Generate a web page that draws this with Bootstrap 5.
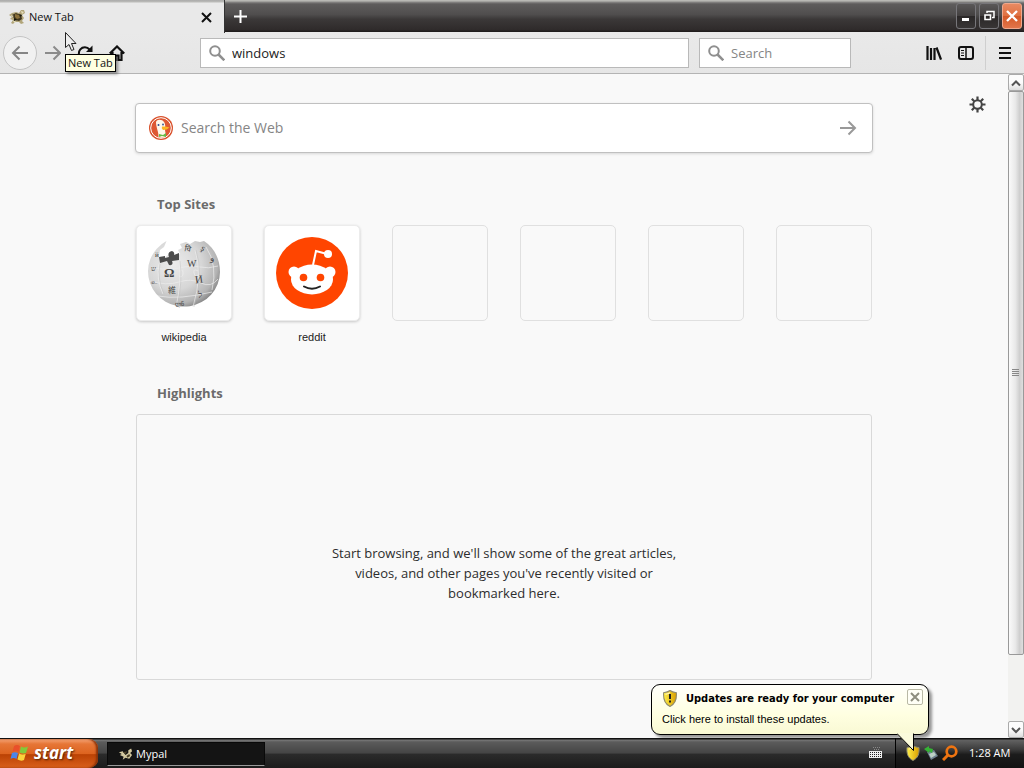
<!DOCTYPE html>
<html lang="en">
<head>
<meta charset="utf-8">
<meta name="viewport" content="width=device-width, initial-scale=1">
<title>New Tab</title>
<link rel="stylesheet" href="https://cdn.jsdelivr.net/npm/bootstrap@5.3.0/dist/css/bootstrap.min.css">
<style>
body { font: 11px/16px "Open Sans", "Noto Sans", sans-serif; color: #111; background: #f9f9f9; }
button { padding: 0; border: 0; background: none; color: inherit; }
svg { display: block; flex: none; }
.titlebar { height: 32px; background: linear-gradient(#b8b8b4 0 1px, #8a8987 2px, #5e5c5c 4px, #504e4e 45%, #3b3838 60%, #2f2b2b 92%, #1c1919); }
.tab { width: 225px; height: 33px; background: linear-gradient(#aaa 0, #bcbcb9 2px, #e9e9e9 3px); padding: 1px 12px 0 9px; border-right: 1px solid #333; z-index: 1; }
.winbtns { gap: 3px; padding: 3px 2px 0 0; }
.tip { left: 65px; top: 54px; height: 18px; padding: 0 2px; background: #ffffe1; border: 1px solid #000; box-shadow: 2px 2px 3px #0006; white-space: nowrap; z-index: 5; }
.pointer { left: 65px; top: 32px; z-index: 6; }
.winbtn { width: 20px; height: 26px; border: 1px solid #77767a; border-radius: 3px; background: linear-gradient(#5a5858, #423f3f 50%, #2b2828 52%, #383535); color: #fff; display: grid; place-items: center; }
.winbtn.shut { border-color: #f0a88c; background: linear-gradient(#e88a62, #e07040 50%, #d45a28 52%, #e2754a); }
.toolbar { height: 42px; background: linear-gradient(#e9e9e9, #e6e6e6); border-bottom: 1px solid #b4b4b4; padding: 0 3px; }
.backbtn { width: 34px; height: 34px; border: 1px solid #c4c4c4; border-radius: 50%; background: #f1f1f1; display: grid; place-items: center; }
.leftset { width: 197px; }
.rightset { width: 170px; padding-right: 9px; }
.divider { width: 1px; height: 34px; background: #cfcfcf; margin: 0 12px 0 11px; }
.field { height: 30px; background: #fff; border: 1px solid #b9b9b9; padding-left: 8px; gap: 7px; }
.quick { width: 152px; margin-left: 10px; }
.field input { border: 0; outline: 0; background: none; min-width: 0; font: 13px/20px "Open Sans", sans-serif; color: #222; padding: 0; }
input::placeholder { color: #858585 !important; opacity: 1; }
.websearch { height: 50px; margin: -1px; background: #fff; border: 1px solid #c0c0c0; border-radius: 4px; box-shadow: 0 1px 3px #0002; padding: 0 15px 0 13px; }
.websearch input { border: 0; outline: 0; font: 14px/22px "Open Sans", sans-serif; min-width: 0; }
.sheet { padding: 30px 16px; }
.inner { max-width: 736px; }
.sites { margin-top: 42px; }
.highlights { margin-top: 38px; }
.heading { font: bold 13px/20px "Open Sans", sans-serif; color: #6b6b6b; margin: 0 0 11px 21px; }
.site { width: 96px; color: #222; text-decoration: none; text-align: center; font-family: "Liberation Sans", sans-serif; }
.tile { height: 96px; border: 1px solid #e0e0e0; border-radius: 5px; margin-bottom: 8px; }
.tile.full { background: #fff; border-color: #ececec; box-shadow: 0 1px 3px #0003; display: grid; place-items: center; }
.empty { min-height: 266px; padding-top: 128px; border: 1px solid #d9d9d9; border-radius: 3px; font-size: 13px; line-height: 20px; text-align: center; color: #2d2d2d; }
.empty p { max-width: 352px; }
.gear { right: 22px; top: 22px; }
.scroller { width: 16px; background: #f2f2f0; }
.scroller button { height: 17px; border: 1px solid #aaa; border-radius: 2px; background: linear-gradient(#fcfcfc 50%, #dedede); display: grid; place-items: center; }
.thumb { flex: 0 0 564px; border: 1px solid #999; border-radius: 2px; background: linear-gradient(90deg, #fafafa, #e9e9e9 45%, #cfcfcf 75%, #dedede); display: grid; place-items: center; }
.taskbar { height: 30px; background: linear-gradient(#111 0 1px, #797979 2px, #5b5b5b 4px, #454545 50%, #2b2b2b 54%, #1c1c1c); color: #fff; }
.startbtn { width: 98px; height: 29px; align-self: end; border-radius: 0 9px 9px 0; background: linear-gradient(#f6a679 0, #e67637 5px, #dd6420 50%, #bb4204 54%, #d9601c); box-shadow: inset -2px 0 2px #8a3208; font: italic bold 17px/24px "Open Sans", sans-serif; text-shadow: 1px 1px 2px #0009; padding: 0 0 1px 10px; }
.taskbtn { width: 158px; height: 24px; margin: 4px 0 0 9px; background: #141414; border: 1px solid #090909; border-bottom-color: #999; padding-left: 10px; gap: 3px; }
.tray { width: 129px; border-left: 1px solid #000; background: linear-gradient(#111 0 1px, #626262 2px, #393939 40%, #1c1c1c 55%, #121212); padding-left: 10px; gap: 3px; }
.balloon { left: -245px; bottom: 33px; width: 278px; height: 51px; background: linear-gradient(#fffffb, #ffffe1 60%, #f9f9d4); border: 1px solid #000; border-radius: 9px; box-shadow: 3px 3px 3px #0006; color: #000; padding: 4px 5px 0 10px; z-index: 5; }
.balloon p { font: 11px/20px "Liberation Sans", sans-serif; margin: 0; white-space: nowrap; }
.balloon .lead-line { font: bold 11px/20px "DejaVu Sans Condensed", sans-serif; }
.balloonx { width: 16px; height: 16px; border: 1px solid #b9b9a5; border-radius: 2px; background: #fffff6; display: grid; place-items: center; }
.tail { left: 245px; top: 48px; }
</style>
</head>
<body class="d-flex flex-column vh-100 overflow-hidden">

<svg width="0" height="0" class="position-absolute" aria-hidden="true">
  <defs>
    <linearGradient id="sh" x1="0" x2="1"><stop offset="0" stop-color="#fff04a"/><stop offset="1" stop-color="#d89e00"/></linearGradient>
    <symbol id="turtle" viewBox="0 0 16 16">
      <path d="M0 6 3 4 7 3 10 4 12 1 15 1 16 4 13 6 15 9 13 12 15 14 12 15 10 13 6 13 4 15 2 14 4 11 1 10 3 8z" fill="#b1a57a"/>
      <path d="M3 6l4-2 5 2 1 4-3 2-4-1z" fill="#423820"/><path d="M6 5l4 1 1 3-3 1-2-2z" fill="#8b713b"/>
      <path d="M12 2l3 1-2 2zM2 6l3 1-2 1zM4 12l3-1-1 3z" fill="#e7dfbd"/><path d="M10 5l3 1-1 2zM5 9l3 2-3 1z" fill="#18180c"/>
    </symbol>
    <symbol id="paleturtle" viewBox="0 0 16 16">
      <path d="M1 6 5 5 8 9 11 7 11 4 14 2 15 5 13 7 15 9 12 13 8 12 5 14 6 11 2 9 4 8z" fill="#d4c9a0"/>
      <path d="M5 6 10 5 8 8zM9 10 12 8 13 10 10 12z" fill="#4b4126"/>
    </symbol>
    <symbol id="shield" viewBox="0 0 14 16">
      <path d="M7 .5C5 2 3 2.300 1 2.500 .5 9 2 13 7 15.500 12 13 13.500 9 13 2.500 11 2.300 9 2 7 .5z" fill="url(#sh)" stroke="#8d8a70"/>
      <path d="M7 2.500C5.500 3.600 4 4 2.700 4" fill="none" stroke="#fffbd0"/>
    </symbol>
    <symbol id="glass" viewBox="0 0 16 16"><circle cx="6" cy="6" r="4.800" fill="none" stroke="#8f8f8f" stroke-width="2"/><path d="M9.500 9.500 15.300 15.300" stroke="#8f8f8f" stroke-width="2.500"/></symbol>
  </defs>
</svg>

<header class="titlebar d-flex position-relative">
  <div class="tab d-flex align-items-center">
    <svg width="16" height="16" class="me-1"><use href="#turtle"/></svg>
    <span class="flex-grow-1">New Tab</span>
    <button aria-label="Close tab"><svg width="11" height="11"><path d="M1 1 10 10M10 1 1 10" stroke="#111" stroke-width="2"/></svg></button>
  </div>
  <button class="ms-2" aria-label="Open a new tab"><svg width="15" height="15"><path d="M7.500 1V14M1 7.500H14" stroke="#fff" stroke-width="2"/></svg></button>
  <div class="winbtns d-flex ms-auto">
    <button class="winbtn" aria-label="Minimize"><svg width="14" height="14"><path d="M3 10.500H10" stroke="#fff" stroke-width="3"/></svg></button>
    <button class="winbtn" aria-label="Restore"><svg width="14" height="14"><path d="M5 4V2.500H12V8.500H10" fill="none" stroke="#fff" stroke-width="1.500"/><path d="M3 6H8.500V10.500H3z" fill="none" stroke="#fff" stroke-width="1.600"/></svg></button>
    <button class="winbtn shut" aria-label="Close"><svg width="14" height="14"><path d="M2 2 12 12M12 2 2 12" stroke="#fff" stroke-width="2.300"/></svg></button>
  </div>
  <div class="tip position-absolute" role="tooltip">New Tab</div>
  <svg class="pointer position-absolute" width="12" height="20"><path d="M.5 .5V15.500L4 12.500 6.500 18.500 9 17.500 6.500 11.500H11z" fill="#eee" stroke="#222"/></svg>
</header>

<nav class="toolbar d-flex align-items-center flex-shrink-0" aria-label="Navigation">
  <div class="leftset d-flex align-items-center">
    <button class="backbtn" aria-label="Back"><svg width="18" height="16"><path d="M17 8H2M8.500 1.500 2 8 8.500 14.500" fill="none" stroke="#868686" stroke-width="2"/></svg></button>
    <button class="ms-2" aria-label="Forward"><svg width="16" height="16"><path d="M0 8H15M8.500 1.500 15 8 8.500 14.500" fill="none" stroke="#8b8b8b" stroke-width="2"/></svg></button>
    <button class="ms-3" aria-label="Reload"><svg width="16" height="16"><path d="M13.500 10.500A6 6 0 1 1 12.500 4.500" fill="none" stroke="#111" stroke-width="2"/><path d="M15.500 .5V7H9z" fill="#111"/></svg></button>
    <button class="ms-3" aria-label="Home"><svg width="16" height="16"><path d="M.8 8.500 8 1.500 15.200 8.500M3.500 7V15H6.500V10.500H9.500V15H12.500V7" fill="none" stroke="#111" stroke-width="2.200"/></svg></button>
  </div>
  <label class="field d-flex align-items-center flex-grow-1">
    <svg width="16" height="16"><use href="#glass"/></svg>
    <input class="flex-grow-1" value="windows" aria-label="Address">
  </label>
  <label class="field quick d-flex align-items-center">
    <svg width="16" height="16"><use href="#glass"/></svg>
    <input class="flex-grow-1" placeholder="Search" aria-label="Search">
  </label>
  <div class="rightset d-flex align-items-center justify-content-end">
    <button aria-label="Library"><svg width="16" height="16"><path d="M1.500 1V15M5 3V15M8.500 3V15M10.500 2.500 15 14.500" stroke="#111" stroke-width="2.200"/></svg></button>
    <button class="ms-3" aria-label="Sidebars"><svg width="16" height="16"><rect x="1" y="2" width="14" height="12" rx="2" fill="none" stroke="#111" stroke-width="2"/><path d="M8 2V14" stroke="#111" stroke-width="1.500"/><path d="M3 5.500H6M3 8H6M3 10.500H6" stroke="#111"/></svg></button>
    <span class="divider"></span>
    <button aria-label="Menu"><svg width="14" height="14"><path d="M1 2H13M1 7H13M1 12H13" stroke="#111" stroke-width="2"/></svg></button>
  </div>
</nav>

<div class="d-flex flex-grow-1 overflow-hidden">
  <main class="sheet position-relative flex-grow-1">
    <button class="gear position-absolute" aria-label="Customize"><svg width="17" height="17" viewBox="0 0 17 17"><circle cx="8.500" cy="8.500" r="4.300" fill="none" stroke="#444" stroke-width="2"/><path d="M8.500 .5V4M8.500 13V16.500M.5 8.500H4M13 8.500H16.500M2.800 2.800 5.200 5.200M11.800 11.800 14.200 14.200M14.200 2.800 11.800 5.200M5.200 11.800 2.800 14.200" stroke="#444" stroke-width="2.200"/></svg></button>
    <div class="inner mx-auto">
      <form class="websearch d-flex align-items-center">
        <svg width="24" height="24" viewBox="0 0 24 24"><circle cx="12" cy="12" r="12" fill="#d9512c"/><circle cx="12" cy="12" r="10.300" fill="#de5833" stroke="#fff" stroke-width="1"/><path d="M7 6C8 3 13 3 15 6 17 9 16 12 16 14L17 20Q13 23 9.500 21C10 17 7 11 7 6z" fill="#fff7ea"/><path d="M13 10.500Q17 10 20.500 11.500 18 14 14 14 12 12 13 10.500z" fill="#fcb423"/><path d="M10 18 14 19 17 17V21L13 20 10 21z" fill="#65bc46"/><circle cx="9.500" cy="9" r="1" fill="#2d4f8e"/><circle cx="14" cy="8.500" r=".9" fill="#2d4f8e"/></svg>
        <input class="flex-grow-1 ms-2 p-0" placeholder="Search the Web" aria-label="Search the Web">
        <button type="button" aria-label="Submit search"><svg width="17" height="16"><path d="M0 8H15M8.500 1.500 15 8 8.500 14.500" fill="none" stroke="#999" stroke-width="2"/></svg></button>
      </form>
      <section class="sites">
        <h2 class="heading">Top Sites</h2>
        <div class="d-flex justify-content-between">
          <a class="site" href="#wikipedia"><div class="tile full">
            <svg width="76" height="76" viewBox="-2 -2 76 76">
              <defs><radialGradient id="globe" cx=".35" cy=".35" r=".72"><stop offset="0" stop-color="#ececec"/><stop offset=".55" stop-color="#d6d6d6"/><stop offset=".85" stop-color="#b4b4b4"/><stop offset="1" stop-color="#808080"/></radialGradient></defs>
              <path d="M18.500 4 16 10 12 13 11 20 16 21 20 18 24 20 32 17 30 13 34 11 32 7 38 5 42 7 47 4 52 5 56 4C66 10 72 22 72 35A36 35 0 1 1 18.500 4z" fill="url(#globe)"/>
              <path d="M11 20 17 19V21L21 20Q19 15 24 14 27 15 26 18L31 16V23L24 24Q26 29 21 28L19 24 12 26z" fill="#4c4c4c"/>
              <path d="M11 27Q8 42 15 57M31 24Q34 44 28 70M47 13Q55 37 45 70M58 10Q70 28 64 53M3 30Q18 34 31 31T52 30 70 29M2 44Q19 49 31 45T53 46 70 42M10 59Q31 63 64 55M31 34q4-3 4 2t-4 3M50 34q-5-3-4 2t4 2" fill="none" stroke="#ededed" stroke-width=".7"/>
              <path d="M12 27Q9 42 16 57M32 24Q35 44 29 70M48 13Q56 37 46 70" fill="none" stroke="#bbb" stroke-width=".4"/>
              <g fill="#444" font-family="Liberation Serif, serif"><text x="16" y="40" font-size="13" font-weight="bold">Ω</text><text x="39" y="30" font-size="10">W</text><text x="47" y="46" font-size="11" transform="rotate(-8 51 43)">И</text><text x="20" y="56" font-size="8" font-family="Noto Sans CJK JP">維</text><text x="50" y="61" font-size="9">ל</text><text x="36" y="14" font-size="8" transform="rotate(12 37 12)">वि</text><text x="53" y="14" font-size="9" transform="rotate(30 55 12)">ş</text><text x="62" y="24" font-size="9">و</text><text x="3" y="34" font-size="7">ש</text><text x="3" y="47" font-size="7">உ</text><text x="27" y="69" font-size="6">ლნ</text><text x="7" y="20" font-size="7">й</text></g>
            </svg></div>wikipedia</a>
          <a class="site" href="#reddit"><div class="tile full">
            <svg width="72" height="72" viewBox="0 0 72 72"><circle cx="36" cy="36" r="36" fill="#ff4500"/><path d="M37 28 40 14 51 17" fill="none" stroke="#fff" stroke-width="2"/><circle cx="52" cy="17" r="4" fill="#fff"/><circle cx="18" cy="35" r="5.500" fill="#fff"/><circle cx="54" cy="35" r="5.500" fill="#fff"/><ellipse cx="36" cy="42.500" rx="21" ry="15" fill="#fff"/><circle cx="27.500" cy="40.500" r="3.800" fill="#ff4500"/><circle cx="44.500" cy="40.500" r="3.800" fill="#ff4500"/><path d="M28 49.500Q36 54 44 49.500" fill="none" stroke="#222" stroke-width="2" stroke-linecap="round"/></svg></div>reddit</a>
          <div class="site"><div class="tile"></div></div>
          <div class="site"><div class="tile"></div></div>
          <div class="site"><div class="tile"></div></div>
          <div class="site"><div class="tile"></div></div>
        </div>
      </section>
      <section class="highlights">
        <h2 class="heading">Highlights</h2>
        <div class="empty"><p class="mx-auto mb-0">Start browsing, and we'll show some of the great articles, videos, and other pages you've recently visited or bookmarked here.</p></div>
      </section>
    </div>
  </main>
  <div class="scroller d-flex flex-column flex-shrink-0">
    <button aria-label="Scroll up"><svg width="10" height="8"><path d="M1 6.500 5 2.500 9 6.500" fill="none" stroke="#555" stroke-width="2"/></svg></button>
    <div class="thumb"><svg width="8" height="8"><path d="M0 .5H7M0 2.500H7M0 4.500H7M0 6.500H7" stroke="#888"/></svg></div>
    <button class="mt-auto" aria-label="Scroll down"><svg width="10" height="8"><path d="M1 2 5 6 9 2" fill="none" stroke="#555" stroke-width="2"/></svg></button>
  </div>
</div>

<footer class="taskbar d-flex flex-shrink-0">
  <button class="startbtn d-flex align-items-center gap-1"><svg width="20" height="18" viewBox="0 0 20 18"><path d="M4 2Q7 0 10 2L8.500 8Q5.500 6 2.500 8z" fill="#e9502a"/><path d="M11 2.500Q14 4.500 18 2.500L16 9Q13 10 9.500 8.500z" fill="#83c93a"/><path d="M2 9Q5 7.500 8 9L6.500 15Q3.500 13 .5 15z" fill="#4b86e8"/><path d="M9 9.500Q12 11 15.700 10L14 16Q11 17.500 7.500 15.500z" fill="#fbd33c"/></svg>start</button>
  <button class="taskbtn d-flex align-items-center"><svg width="15" height="16"><use href="#paleturtle"/></svg>Mypal</button>
  <div class="ms-auto d-flex align-items-center pe-2 me-1"><svg width="14" height="14"><path d="M4 1.500H12M5 3.500H11" stroke="#888" stroke-dasharray="1 1"/><rect y="5" width="13" height="7" fill="#eee"/><path d="M1 6.500H12M1 8.500H12M1 10.500H12" stroke="#222" stroke-dasharray="1 1"/></svg></div>
  <div class="tray d-flex align-items-center position-relative">
    <svg width="14" height="16"><use href="#shield"/></svg>
    <svg width="16" height="16"><path d="M4 7 11 5 15 11 8 15z" fill="#708090"/><path d="M6 9 11 7 13 10 8 13z" fill="#bdd0c6"/><path d="M1 4 6 1V3L10 4 9 8 6 6V8z" fill="#35b335"/></svg>
    <svg width="16" height="16"><circle cx="9.500" cy="6.500" r="4.800" fill="none" stroke="#ee7411" stroke-width="2.700"/><path d="M6.500 9.500 1 15" stroke="#ee7411" stroke-width="3"/></svg>
    <time class="ms-1 ps-1">1:28 AM</time>
    <div class="balloon position-absolute" role="status">
      <div class="d-flex align-items-start"><svg width="16" height="18" viewBox="0 0 16 18"><use href="#shield" width="16" height="17" y="1"/><path d="M8 5V10M8 11.500V13.500" stroke="#222" stroke-width="2"/></svg>
        <p class="lead-line ms-2 flex-grow-1">Updates are ready for your computer</p>
        <button class="balloonx" aria-label="Dismiss"><svg width="10" height="10"><path d="M1 1 9 9M9 1 1 9" stroke="#8e8e7e" stroke-width="2"/></svg></button></div>
      <p>Click here to install these updates.</p>
      <svg class="tail position-absolute" width="20" height="20"><path d="M0 0V1L17 18V0z" fill="#fafadb"/><path d="M0 .5 16.500 17.500V.5" fill="none" stroke="#000"/></svg>
    </div>
  </div>
</footer>
<script src="https://cdn.jsdelivr.net/npm/bootstrap@5.3.0/dist/js/bootstrap.bundle.min.js"></script>
</body>
</html>
